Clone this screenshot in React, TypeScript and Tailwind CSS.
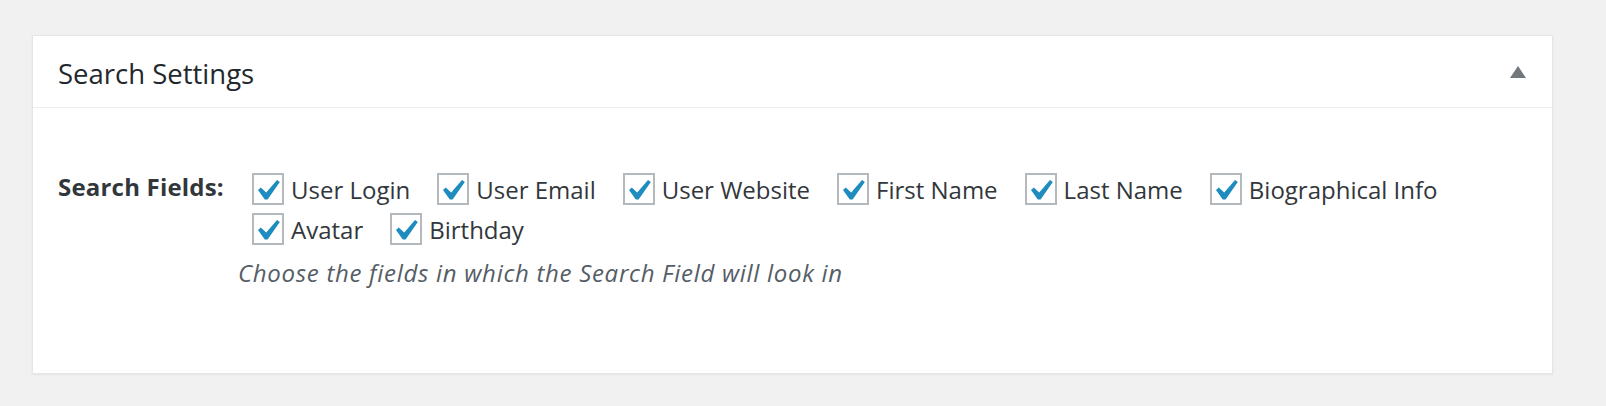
import React from "react";

const fields = [
  ["User Login", "User Email", "User Website", "First Name", "Last Name", "Biographical Info"],
  ["Avatar", "Birthday"],
];

function Checkbox() {
  return (
    <span className="w-[32px] h-[32px] shrink-0 border-2 border-[#b4b9be] bg-white flex">
      <svg width="28" height="28" viewBox="3.88 2.51 13.33 13.33">
        <path d="M14.83 4.89l1.34.94-5.81 8.38H9.02L5.78 9.67l1.34-1.25 2.57 2.4z" fill="#1e8cbe" />
      </svg>
    </span>
  );
}

export default function App() {
  return (
    <div
      className="min-h-screen bg-[#f1f1f1] pt-[35px] pl-[32px] pr-[53px]"
      style={{ fontFamily: '"Open Sans", "Noto Sans", sans-serif' }}
    >
      <div className="bg-white border border-[#e5e5e5] shadow-[0_1px_2px_rgba(0,0,0,0.06)]">
        {/* Header */}
        <div className="h-[72px] border-b border-[#eeeeee] flex items-center justify-between pl-[25px] pr-[26px]">
          <h2 className="text-[27.5px] text-[#23282d] leading-none translate-y-[2px]">Search Settings</h2>
          <svg width="16" height="12" viewBox="0 0 16 12">
            <path d="M8 0L16 12H0z" fill="#72777c" />
          </svg>
        </div>

        {/* Body */}
        <div className="h-[265px] pt-[65px] pl-[25px] pr-[25px] flex">
          <div className="w-[180px] shrink-0 text-[24px] tracking-[0.2px] font-bold text-[#32373c] leading-[32px] -mt-[2px]">
            Search Fields:
          </div>
          <div className="flex flex-col">
            {fields.map((row, r) => (
              <div key={r} className="flex gap-x-[27px] ml-[14px] mb-[8px]">
                {row.map((f) => (
                  <label key={f} className="flex items-center gap-[7px] text-[24px] text-[#32373c] leading-[32px]">
                    <Checkbox />
                    <span className="translate-y-[1px]">{f}</span>
                  </label>
                ))}
              </div>
            ))}
            <p className="mt-[4px] text-[24px] tracking-[0.7px] italic text-[#555d66] leading-[32px]">
              Choose the fields in which the Search Field will look in
            </p>
          </div>
        </div>
      </div>
    </div>
  );
}
